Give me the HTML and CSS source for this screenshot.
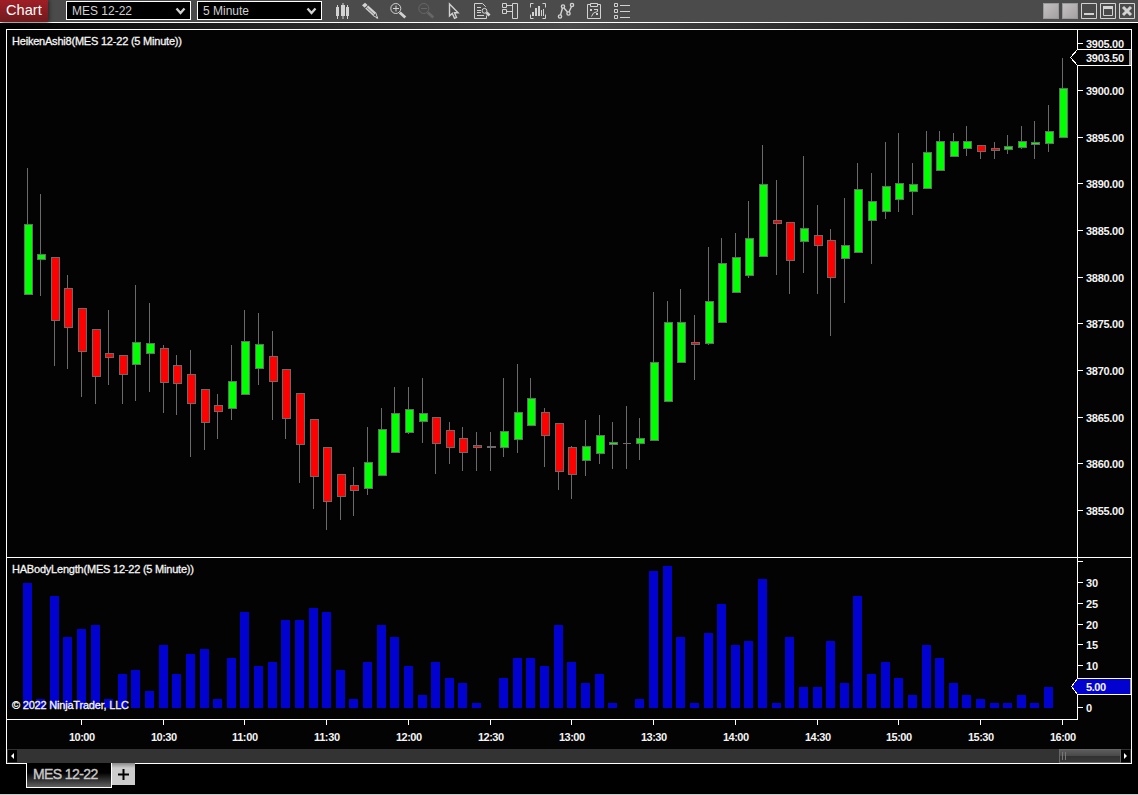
FILE: index.html
```html
<!DOCTYPE html>
<html lang="en">
<head>
  <meta charset="UTF-8" />
  <meta name="viewport" content="width=device-width, initial-scale=1.0" />
  <title>Chart - MES 12-22</title>
  <link rel="stylesheet" href="styles.css">
</head>
<body>
  <header class="toolbar">
    <div class="brand">Chart</div>
    <div class="select">MES 12-22
      <svg width="11" height="8" viewBox="0 0 11 8"><path d="M1.5 1.5l4 4.5 4-4.5"/></svg>
    </div>
    <div class="select">5 Minute
      <svg width="11" height="8" viewBox="0 0 11 8"><path d="M1.5 1.5l4 4.5 4-4.5"/></svg>
    </div>
    <nav class="icons">
      <svg viewBox="0 0 28 22"><path class="fill" d="M8 7h3v9H8zM9 5h1v14H9zM13 5h4v11h-4zM14.5 3h1v16h-1zM18 7h3v9h-3zM19 5h1v14h-1z"/></svg>
      <svg viewBox="0 0 28 22"><path class="fill" d="M6 5.200l3-2.400 2.600 2.200-3 2.800zM9.200 8.400l3-2.800 8 7.200-3.200 3zM22.300 18.700l-2.300-.5 1.600-1.800z"/><path d="M17 15.500l4.500 2.500-1.700-5.200"/><path class="dark" d="M10.300 7.200l7.700 7"/></svg>
      <svg viewBox="0 0 28 22"><circle cx="11.800" cy="8.500" r="5"/><path d="M9 8.500h6M12 5.500v6"/><path class="thick" d="M15.800 12.500l5.500 5"/></svg>
      <svg class="off" viewBox="0 0 28 22"><circle cx="11.800" cy="8.500" r="5"/><path d="M9 8.500h6"/><path class="thick" d="M15.800 12.500l5.500 5"/></svg>
      <svg viewBox="0 0 28 22"><path class="mid" d="M9.500 4v12l2.800-2.500 2.200 4.800 2-1-2-4.500h3.600z"/></svg>
      <svg viewBox="0 0 28 22"><path d="M17.500 7V6.500l-3-3h-8v15h12v-3M9 7.500h4M9 10.500h4M9 12.500h4M9 15.500h7"/><circle cx="16.500" cy="10.800" r="2.400"/><path class="thick" d="M18.500 12.500l3 3"/></svg>
      <svg viewBox="0 0 28 22"><path d="M6.500 3.500h4v4h-4zM6.500 9.500h4v4h-4zM10.500 5.500h6M10.500 11.500h6M16.500 3.500h5v15h-5z"/></svg>
      <svg viewBox="0 0 28 22"><path d="M9.500 3.500h-3v4M18.500 3.500h3v4M9.500 18.500h-3v-4M18.500 18.500h3v-4"/><path class="fill" d="M8 12h2v4H8zM11 8h2v8h-2zM14 6h2v10h-2zM17 10h1v6h-1zM19 9h1v7h-1z"/></svg>
      <svg viewBox="0 0 28 22"><g class="mid"><circle cx="8" cy="16.500" r="1.600"/><circle cx="11" cy="6.500" r="1.600"/><circle cx="16.500" cy="13.500" r="1.600"/><circle cx="20" cy="5" r="1.600"/><path d="M8.500 15l2-7M12 8l3.500 4M17 12l2.500-5.500"/></g></svg>
      <svg viewBox="0 0 28 22"><path d="M10 4.500H7.500v14h13v-14H18M10.500 3.500h7v3h-7z"/><path d="M10 9l2 2m0-2l-2 2M16 13l2 2m0-2l-2 2M14 9.500h3.500M17.500 9v2.500l-4 1.500-2 3.500"/></svg>
      <svg viewBox="0 0 28 22"><path d="M6.500 3.500h3v3h-3zM6.500 9.500h3v3h-3zM6.500 15.500h3v3h-3zM12 5.500h10M12 11.500h10M12 17.500h10"/></svg>
    </nav>
    <div class="window-buttons">
      <span class="block"></span>
      <span class="block"></span>
      <svg viewBox="0 0 16 16"><path d="M.5.5h15v15H.5z"/><path class="fill" d="M3 10h10v2H3z"/></svg>
      <svg viewBox="0 0 16 16"><path d="M.5.5h15v15H.5zM3.500 3.500h9v9h-9z"/><path class="fill" d="M3 3h10v3H3z"/></svg>
      <svg viewBox="0 0 16 16"><path d="M.5.5h15v15H.5z"/><path class="cross" d="M4 4l8 8M12 4l-8 8"/></svg>
    </div>
  </header>

  <main class="workspace">
    <section class="chart">
      <svg id="price" class="panel" width="1124" height="527" viewBox="7 30 1124 527"></svg>
      <svg id="length" class="panel" width="1124" height="161" viewBox="7 558 1124 161"></svg>
      <svg id="time" width="1124" height="30" viewBox="7 719 1124 30"></svg>
      <div class="scrollbar">
        <span class="arrow"><svg width="5" height="6" viewBox="0 0 5 6"><path d="M4 0v6L1 3z"/></svg></span>
        <span class="thumb"></span>
        <span class="arrow"><svg width="5" height="6" viewBox="0 0 5 6"><path d="M1 0v6l3-3z"/></svg></span>
      </div>
    </section>
    <footer class="tabs">
      <div class="tab">MES 12-22</div>
      <div class="add"><svg width="11" height="11" viewBox="0 0 11 11"><path d="M5.500 0v11M0 5.500h11"/></svg></div>
    </footer>
  </main>

  <script src="chart.js"></script>
</body>
</html>
```
FILE: styles.css
```css
* {
  box-sizing: border-box;
}
body {
  margin: 0;
  height: 795px;
  overflow: hidden;
  background: #000;
  border-bottom: 1px solid #ccc;
  font-family: "Liberation Sans", Arial, sans-serif;
}
svg {
  display: block;
}

/* toolbar */
.toolbar {
  display: flex;
  height: 23px;
  background: #4b4b4b;
  border-bottom: 1px solid #fff;
}
.brand {
  width: 48px;
  padding-left: 6px;
  margin-right: 18px;
  background: linear-gradient(#a01e26, #701a1e);
  box-shadow: 1px 0 4px #222;
  color: #fff;
  font-size: 14.6px;
  line-height: 21px;
}
.select {
  display: flex;
  align-items: center;
  justify-content: space-between;
  width: 125px;
  height: 19px;
  margin: 1px 6px 0 0;
  padding: 0 4px 0 5px;
  background: #000;
  border: 1px solid #fff;
  color: #d0d0d0;
  font-size: 12px;
}
.select path {
  fill: none;
  stroke: #d0d0d0;
  stroke-width: 2.3;
}
.icons {
  display: flex;
}
.icons svg {
  width: 28px;
  height: 22px;
}
.icons path, .icons circle {
  fill: none;
  stroke: #d2d2d2;
}
.icons .fill {
  fill: #d2d2d2;
  stroke: none;
}
.icons .thick {
  stroke-width: 2.8;
}
.icons .mid {
  stroke-width: 1.4;
}
.icons .dark {
  stroke: #777;
}
.icons .off {
  opacity: 0.2;
}
.window-buttons {
  display: flex;
  gap: 3px;
  margin: 3px 3px 0 auto;
}
.window-buttons svg, .block {
  width: 16px;
  height: 16px;
}
.block {
  background: linear-gradient(135deg, #c4c0c2, #a5a1a3);
  border: 1px solid #999;
}
.window-buttons path {
  fill: none;
  stroke: #d2d2d2;
}
.window-buttons .fill {
  fill: #d2d2d2;
  stroke: none;
}
.window-buttons .cross {
  stroke-width: 3;
}

/* chart */
.workspace {
  height: 771px;
  padding: 6px 6px 0;
  background: linear-gradient(90deg, #000, #4a4a4a 50%, #000) top / 100% 6px no-repeat #000;
}
.chart {
  width: 1126px;
  background: #030303;
  border: 1px solid #fff;
}
#price {
  height: 528px;
  border-bottom: 1px solid #fff;
}
.panel, #time {
  shape-rendering: crispEdges;
}
text {
  fill: #f4f4f4;
  stroke: #f4f4f4;
  stroke-width: 0.3;
  font-size: 11px;
}
.axis {
  font-weight: bold;
  stroke: none;
}
.line {
  fill: #fff;
}
.wick {
  fill: #6a6a6a;
}
.up, .down {
  stroke: #6a6a6a;
}
.up {
  fill: #00ff00;
}
.down {
  fill: #ff0000;
}
.bar {
  fill: #0202d0;
}
.marker {
  fill: #030303;
  stroke: #fff;
}
.marker.blue {
  fill: #0202d0;
}
.marker-edge {
  fill: #999;
}

.scrollbar {
  display: flex;
  height: 14px;
  background: #333;
  padding: 0 1px;
}
.arrow {
  display: flex;
  align-items: center;
  justify-content: center;
  width: 9px;
  height: 12px;
  margin-top: 1px;
  background: #000;
}
.arrow path {
  fill: #fff;
}
.thumb {
  width: 62px;
  margin-left: auto;
  border: 1px solid #666;
  background:
    linear-gradient(#777, #777) 2px 2px / 1px 8px no-repeat,
    linear-gradient(#777, #777) 5px 2px / 1px 8px no-repeat,
    linear-gradient(#5c5c5c, #484848 50%, #303030 50%, #383838);
}

/* tabs */
.tabs {
  display: flex;
  margin: -1px 0 0 20px;
}
.tab {
  width: 86px;
  height: 25px;
  padding-left: 6px;
  border: 1px solid #fff;
  border-top: none;
  background: linear-gradient(#000 40%, #606060);
  color: #c8c8c8;
  font-size: 14px;
  letter-spacing: -0.6px;
  line-height: 22px;
  white-space: nowrap;
  -webkit-text-stroke: 0.4px #c8c8c8;
}
.add {
  display: flex;
  align-items: center;
  justify-content: center;
  width: 23px;
  height: 22px;
  background: linear-gradient(#888, #ccc 5px);
}
.add path {
  stroke: #000;
  stroke-width: 2;
}
```
FILE: chart.js
```js
// high, body top, body bottom, low, type
const candles = [
  [168,224,295,295,'u'],[194,254,260,296,'u'],[257,257,321,366,'d'],[275,288,328,369,'d'],
  [308,308,352,397,'d'],[329,329,377,404,'d'],[310,353,358,385,'d'],[355,355,375,404,'d'],
  [285,342,365,401,'u'],[303,343,354,392,'u'],[345,348,383,413,'d'],[355,365,384,415,'d'],
  [350,374,404,457,'d'],[389,389,423,450,'d'],[394,405,412,439,'d'],[345,381,409,420,'u'],
  [310,341,395,395,'u'],[313,344,369,385,'u'],[331,356,382,420,'d'],[369,369,419,439,'d'],
  [393,393,445,483,'d'],[419,419,477,509,'d'],[447,447,502,530,'d'],[474,474,497,520,'d'],
  [467,485,491,516,'d'],[427,462,489,495,'u'],[408,429,476,476,'u'],[387,413,453,453,'u'],
  [387,409,433,434,'u'],[378,413,422,443,'u'],[417,417,444,474,'d'],[422,430,448,464,'d'],
  [427,438,453,471,'d'],[432,445,448,471,'d'],[432,446,448,471,'f'],[378,431,448,457,'u'],
  [364,412,440,453,'u'],[378,398,426,426,'u'],[408,412,436,467,'d'],[423,423,472,490,'d'],
  [446,447,475,499,'d'],[420,446,461,476,'u'],[415,435,454,464,'u'],[422,442,445,469,'u'],
  [406,443,444,469,'f'],[418,438,444,460,'u'],[292,362,441,441,'u'],[301,322,402,402,'u'],
  [289,322,363,363,'u'],[315,342,345,380,'d'],[247,301,344,345,'u'],[238,263,323,323,'u'],
  [233,257,293,293,'u'],[201,238,276,278,'u'],[145,184,257,257,'u'],[180,220,224,275,'d'],
  [222,222,261,294,'d'],[156,228,242,273,'u'],[205,235,246,294,'d'],[229,240,278,336,'d'],
  [198,245,259,303,'u'],[163,189,253,253,'u'],[173,201,221,264,'u'],[142,186,212,219,'u'],
  [133,183,200,212,'u'],[163,184,192,215,'u'],[131,152,189,189,'u'],[131,141,171,171,'u'],
  [133,141,157,157,'u'],[126,141,149,156,'u'],[145,145,152,159,'d'],[142,148,151,159,'d'],
  [135,146,150,154,'u'],[126,141,148,149,'u'],[121,142,145,159,'u'],[105,131,144,152,'u'],
  [58,88,138,138,'u']
];

const lengths = [
  30,2,27,17,19,20,2,8,9,4,15,8,13,14,2,12,23,10,11,21,21,24,23,9,2,11,20,17,10,3,
  11,7,6,1,0,7,12,12,10,20,11,6,8,1,0,2,33,34,17,1,18,25,15,16,31,1,17,5,5,16,
  6,27,8,11,7,3,15,12,6,3,2,1,1,3,1,5
];

const classes = { u: 'up', d: 'down' };
const barX = i => Math.floor(27 + i * 13.6215);
const rect = (cls, x, y, w, h) => `<rect class="${cls}" x="${x}" y="${y}" width="${w}" height="${h}"/>`;
const label = (cls, x, y, text, width, anchor = 'start') =>
  `<text class="${cls}" x="${x}" y="${y}" textLength="${width}" text-anchor="${anchor}">${text}</text>`;

function drawPrice() {
  let out = rect('line', 1077, 30, 1, 527);
  candles.forEach(([high, top, bottom, low, type], i) => {
    const x = barX(i);
    out += rect('wick', x, high, 1, low - high);
    if (type === 'f') {
      out += rect('wick', x - 3, top, bottom - top > 1 ? 9 : 8, bottom - top);
    } else {
      out += rect(classes[type], x - 2.5, top + 0.5, 8, bottom - top - 1);
    }
  });
  for (let i = 0; i <= 10; i++) {
    const y = Math.floor(43.6 + i * 46.7);
    out += rect('line', 1077, y, 6, 1) + label('axis', 1086, y + 5, (3905 - i * 5).toFixed(2), 38);
  }
  out += '<path class="marker" d="M1077.5 49.500H1130V65.500H1077.500L1070.500 57.500z"/>';
  out += rect('marker-edge', 1129, 50, 2, 15);
  out += label('axis', 1086, 62, '3903.50', 38);
  out += label('title', 12, 45, 'HeikenAshi8(MES 12-22 (5 Minute))', 170);
  document.getElementById('price').innerHTML = out;
}

function drawLengths() {
  let out = rect('line', 1077, 558, 1, 161);
  lengths.forEach((value, i) => {
    if (!value) return;
    const h = Math.round(value * 4.149 + 0.46);
    out += rect('bar', barX(i) - 4, 708 - h, 9, h);
  });
  for (let v = 0; v <= 35; v += 5) {
    const y = Math.floor(707.5 - v * 4.17);
    out += rect('line', 1077, y, 6, 1);
    if (v !== 5 && v !== 35) out += label('axis', 1086, y + 5, v, v > 5 ? 12 : 6);
  }
  out += '<path class="marker blue" d="M1077.5 678.500H1130V694.500H1077.500L1071.500 686.500z"/>';
  out += rect('marker-edge', 1130, 679, 1, 15);
  out += label('axis', 1086, 691, '5.00', 20);
  out += label('title', 12, 573, 'HABodyLength(MES 12-22 (5 Minute))', 182);
  out += label('title', 12, 709, '© 2022 NinjaTrader, LLC', 117);
  document.getElementById('length').innerHTML = out;
}

function drawTimes() {
  let out = rect('line', 7, 719, 1071, 1);
  for (let i = 4; i <= 76; i += 6) {
    const minutes = 580 + i * 5;
    const text = Math.floor(minutes / 60) + ':' + String(minutes % 60).padStart(2, '0');
    out += rect('line', barX(i), 719, 1, 6) + label('axis', barX(i) + 1, 741, text, 26, 'middle');
  }
  document.getElementById('time').innerHTML = out;
}

drawPrice();
drawLengths();
drawTimes();
```
